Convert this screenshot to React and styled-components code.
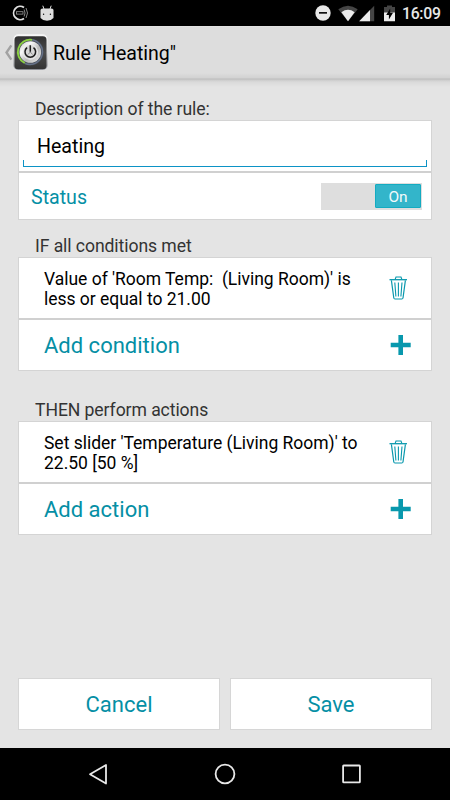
import styled, { createGlobalStyle } from 'styled-components';

const GlobalStyle = createGlobalStyle`
  * {
    box-sizing: border-box;
  }

  body {
    margin: 0;
    background: #e4e4e4;
    font-family: Roboto, 'Liberation Sans', sans-serif;
  }

  button {
    font-family: inherit;
    padding: 0;
    border: none;
    background: none;
  }

  svg {
    display: block;
    flex: none;
  }
`;

const Screen = styled.div`
  width: 450px;
  height: 800px;
  display: flex;
  flex-direction: column;
  background: #e4e4e4;
  overflow: hidden;
`;

const StatusBar = styled.header`
  height: 26px;
  flex: none;
  display: flex;
  align-items: center;
  justify-content: space-between;
  padding: 0 9px 0 12px;
  background: #000;
`;

const StatusIcons = styled.div`
  display: flex;
  align-items: center;
`;

const Clock = styled.span`
  width: 39px;
  margin-left: 7px;
  padding-top: 2px;
  color: #e8e8e8;
  font-size: 15.8px;
  font-weight: 500;
  line-height: 26px;
  letter-spacing: -0.3px;
  white-space: nowrap;
`;

const ActionBar = styled.div`
  height: 61px;
  flex: none;
  display: flex;
  align-items: flex-start;
  padding: 8px 0 0 4px;
  background: linear-gradient(
    #e8e8e8 0,
    #dddddd 1px,
    #dddddd 47px,
    #d6d6d6 50px,
    #d2d2d2 52px,
    #bcbcbc 53px,
    #cccccc 54px,
    #dadada 56px,
    #e4e4e4 61px
  );
`;

const ActionTitle = styled.h1`
  margin: 0 0 0 5px;
  color: #000;
  font-size: 19.55px;
  font-weight: 400;
  line-height: 40px;
  white-space: pre;
`;

const Form = styled.main`
  flex: 1;
  display: flex;
  flex-direction: column;
  padding: 10px 18px 18px;
`;

const SectionLabel = styled.h2`
  height: ${props => props.$height}px;
  margin: 0;
  padding-left: 17px;
  display: flex;
  align-items: flex-end;
  color: #333;
  font-size: 17.6px;
  font-weight: 400;
  line-height: 21px;
  letter-spacing: -0.08px;
  white-space: nowrap;
`;

const Card = styled.section`
  border: 1px solid #d4d4d4;
  background: #fff;
`;

const Row = styled.div`
  height: ${props => props.$height}px;
  display: flex;
  align-items: center;
  justify-content: space-between;
  padding: 0 ${props => props.$right || 20}px 0 ${props => props.$left || 25}px;

  & + & {
    border-top: 2px solid #d0d0d0;
  }
`;

const NameRow = styled.div`
  height: 50px;
  padding: 0 4px 4px;
  display: flex;
  flex-direction: column;
  justify-content: flex-end;

  & + ${Row} {
    border-top: 2px solid #d0d0d0;
  }
`;

const NameText = styled.div`
  height: 39px;
  padding-left: 14px;
  color: #000;
  font-size: 19.6px;
  line-height: 52px;
`;

const Underline = styled.div`
  height: 7px;
  border: solid #0c93c6;
  border-width: 0 1px 1px;
`;

const StatusText = styled.span`
  padding-top: 2px;
  color: #058fa5;
  font-size: 19.6px;
`;

const Toggle = styled.div`
  width: 101px;
  height: 27px;
  display: flex;
  justify-content: flex-end;
  padding: 1px 1px 2px 0;
  background: #dedede;
`;

const ToggleThumb = styled.div`
  width: 46px;
  height: 24px;
  border: 1px solid #14abc1;
  border-radius: 1px;
  background: #33b5ca;
  color: #f2fafb;
  font-size: 15.5px;
  line-height: 25px;
  text-align: center;
`;

const RuleText = styled.p`
  margin: 0;
  padding-top: 2px;
  color: #000;
  font-size: 17.5px;
  line-height: 20.5px;
  letter-spacing: -0.02px;
  white-space: pre;
`;

const AddText = styled.span`
  color: #058fa5;
  font-size: 22px;
`;

const ButtonRow = styled.div`
  margin-top: auto;
  display: grid;
  grid-template-columns: 1fr 1fr;
  gap: 10px;
`;

const FormButton = styled.button`
  height: 52px;
  border: 1px solid #d6d6d6;
  background: #fff;
  color: #058fa5;
  font-size: 22px;
`;

const NavBar = styled.nav`
  height: 52px;
  flex: none;
  display: flex;
  align-items: center;
  justify-content: center;
  gap: 103px;
  background: #000;
`;

const SyncIcon = () => (
  <svg width="16" height="16" viewBox="0 0 16 16" fill="none">
    <path d="M12 2.6A6.6 6.6 0 1 0 12 13.4" stroke="#e0e0e0" strokeWidth="1.8" />
    <rect x="4.5" y="6.7" width="6.5" height="2.4" stroke="#999" strokeWidth="0.8" />
    <path d="M12.1 4.5Q14 8 12.1 11.5M14 3Q17 8 14 13" stroke="#999" strokeWidth="0.9" />
  </svg>
);

const AndroidIcon = () => (
  <svg width="14" height="17" viewBox="0 0 14 17">
    <path d="M2.8.7L4 4M11.2.7L10 4" stroke="#ddd" strokeWidth="1" />
    <path d="M.5 4.8Q1.3 3.4 3 3.4H11Q12.7 3.4 13.5 4.8V13Q11.3 15.7 7 15.7T.5 13Z" fill="#ddd" />
    <circle cx="3.6" cy="9.2" r=".7" fill="#111" />
    <circle cx="10.4" cy="9.2" r=".7" fill="#111" />
  </svg>
);

const DndIcon = () => (
  <svg width="16" height="16" viewBox="0 0 16 16">
    <circle cx="8" cy="8" r="7.7" fill="#e8e8e8" />
    <rect x="4" y="7" width="8" height="1.7" fill="#111" />
  </svg>
);

const WifiIcon = () => (
  <svg width="20" height="17" viewBox="0 0 20 17">
    <path d="M.3 4.2Q10-2.8 19.7 4.2L10 16.2Z" fill="#454545" />
    <path d="M3.4 7.2Q10 2.4 16.6 7.2L10 16.2Z" fill="#ececec" />
  </svg>
);

const SignalIcon = () => (
  <svg width="16" height="17" viewBox="0 0 16 17">
    <path d="M15.2.8V16.2H.2Z" fill="#454545" />
    <path d="M11 5.1V16.2H.2Z" fill="#ececec" />
  </svg>
);

const BatteryIcon = () => (
  <svg width="11" height="17" viewBox="0 0 11 17">
    <path d="M3 .5H8V2H11V16.2H0V2H3Z" fill="#454545" />
    <rect y="7.5" width="11" height="8.7" fill="#ececec" />
    <path d="M6.2 3.5L2.2 10H4.9V14.5L9 7.8H6.2Z" fill="#000" />
  </svg>
);

const UpIcon = () => (
  <svg width="9" height="36" viewBox="0 0 9 36">
    <path d="M7.3 11.3L2.5 18.5L7.3 25.7" fill="none" stroke="#a2a2a2" strokeWidth="2.4" />
  </svg>
);

const AppIcon = () => (
  <svg width="35" height="37" viewBox="0 0 35 37">
    <defs>
      <linearGradient id="frame" x1="0" y1="0" x2="0" y2="1">
        <stop offset="0" stopColor="#f7f7f7" />
        <stop offset=".45" stopColor="#dddddd" />
        <stop offset="1" stopColor="#8b8d94" />
      </linearGradient>
      <linearGradient id="face" x1="0" y1="0" x2="0" y2="1">
        <stop offset="0" stopColor="#303030" />
        <stop offset=".5" stopColor="#4b4b4b" />
        <stop offset="1" stopColor="#343434" />
      </linearGradient>
      <linearGradient id="knob" x1="0" y1="0" x2="1" y2="1">
        <stop offset="0" stopColor="#c4c4c4" />
        <stop offset=".3" stopColor="#f8f8f8" />
        <stop offset=".6" stopColor="#b9b9b9" />
        <stop offset="1" stopColor="#f0f0f0" />
      </linearGradient>
    </defs>
    <rect x=".3" y=".3" width="34.4" height="35.7" rx="5" fill="url(#frame)" />
    <rect x="1.5" y="2.3" width="32" height="32.7" rx="3.6" fill="url(#face)" />
    <circle cx="17.3" cy="18" r="13.3" fill="#4a4f58" />
    <path d="M17.3 5.6A12.4 12.4 0 1 1 12 29.3" fill="none" stroke="#66728a" strokeWidth="1.4" />
    <path d="M19 5.8A12.3 12.3 0 0 0 11.7 29" fill="none" stroke="#8bd23f" strokeWidth="1.8" />
    <circle cx="17.3" cy="18" r="10.8" fill="url(#knob)" />
    <circle cx="17.3" cy="18" r="7.3" fill="#d8d8d8" stroke="#eee" strokeWidth=".8" />
    <path d="M14.1 13.7A5.3 5.3 0 1 0 20.5 13.7M17.3 11.2V17.8" fill="none" stroke="#1d1d1d" strokeWidth="1.5" />
    <path d="M15 20.5L17.3 18L19.6 20.5" fill="none" stroke="#777" strokeWidth=".8" />
  </svg>
);

const TrashIcon = () => (
  <svg width="18" height="24" viewBox="0 0 18 24" fill="none" stroke="#0898ad">
    <path d="M6.2 3.2L7 1H12L12.8 3.2" strokeWidth="1.1" />
    <path d="M.5 3.7H18" strokeWidth="1.3" />
    <path d="M2.4 4.3L4.8 22Q5 23 6 23H12.8Q13.8 23 14 22L16.4 4.3" strokeWidth="1.2" />
    <path d="M5.8 6.5L6.9 20.5M9.4 6.5V20.5M13 6.5L11.9 20.5" strokeWidth="1.1" />
  </svg>
);

const PlusIcon = () => (
  <svg width="21" height="20" viewBox="0 0 21 20">
    <path d="M8.4 0H13V7.8H20.7V12.2H13V20H8.4V12.2H.7V7.8H8.4Z" fill="#0898ad" />
  </svg>
);

const TrashButton = styled.button`
  width: 18px;
  height: 24px;
  margin-right: 4px;
`;

const AddButton = styled.button`
  width: 21px;
  height: 20px;
`;

const LeftIcons = styled(StatusIcons)`
  gap: 12px;
`;

const RightIcons = styled(StatusIcons)`
  svg:nth-of-type(2) {
    margin-left: 7px;
  }

  svg:nth-of-type(3) {
    margin-left: 1px;
  }

  svg:nth-of-type(4) {
    margin-left: 9px;
  }
`;

const sections = [
  {
    title: 'IF all conditions met',
    labelHeight: 37,
    text: "Value of 'Room Temp:  (Living Room)' is\nless or equal to 21.00",
    add: 'Add condition',
  },
  {
    title: 'THEN perform actions',
    labelHeight: 50,
    text: "Set slider 'Temperature (Living Room)' to\n22.50 [50 %]",
    add: 'Add action',
  },
];

const App = () => (
  <>
    <GlobalStyle />
    <Screen>
      <StatusBar>
        <LeftIcons>
          <SyncIcon />
          <AndroidIcon />
        </LeftIcons>
        <RightIcons>
          <DndIcon />
          <WifiIcon />
          <SignalIcon />
          <BatteryIcon />
          <Clock>16:09</Clock>
        </RightIcons>
      </StatusBar>
      <ActionBar>
        <UpIcon />
        <AppIcon />
        <ActionTitle>Rule "Heating"</ActionTitle>
      </ActionBar>
      <Form>
        <SectionLabel $height={23}>Description of the rule:</SectionLabel>
        <Card>
          <NameRow>
            <NameText>Heating</NameText>
            <Underline />
          </NameRow>
          <Row $height={48} $left={12} $right={9}>
            <StatusText>Status</StatusText>
            <Toggle>
              <ToggleThumb>On</ToggleThumb>
            </Toggle>
          </Row>
        </Card>
        {sections.map(section => (
          <div key={section.title}>
            <SectionLabel $height={section.labelHeight}>{section.title}</SectionLabel>
            <Card>
              <Row $height={60}>
                <RuleText>{section.text}</RuleText>
                <TrashButton aria-label="Delete">
                  <TrashIcon />
                </TrashButton>
              </Row>
              <Row $height={52}>
                <AddText>{section.add}</AddText>
                <AddButton aria-label={section.add}>
                  <PlusIcon />
                </AddButton>
              </Row>
            </Card>
          </div>
        ))}
        <ButtonRow>
          <FormButton>Cancel</FormButton>
          <FormButton>Save</FormButton>
        </ButtonRow>
      </Form>
      <NavBar>
        <svg width="24" height="24" viewBox="0 0 24 24" fill="none" stroke="#e8e8e8" strokeWidth="1.8">
          <path d="M20 3V21.5L4 12.2Z" strokeLinejoin="round" />
        </svg>
        <svg width="24" height="24" viewBox="0 0 24 24" fill="none" stroke="#e8e8e8" strokeWidth="1.8">
          <circle cx="12" cy="12" r="9.4" />
        </svg>
        <svg width="24" height="24" viewBox="0 0 24 24" fill="none" stroke="#e8e8e8" strokeWidth="1.8">
          <rect x="3.1" y="3.5" width="16.8" height="16.8" rx=".6" />
        </svg>
      </NavBar>
    </Screen>
  </>
);

export default App;
